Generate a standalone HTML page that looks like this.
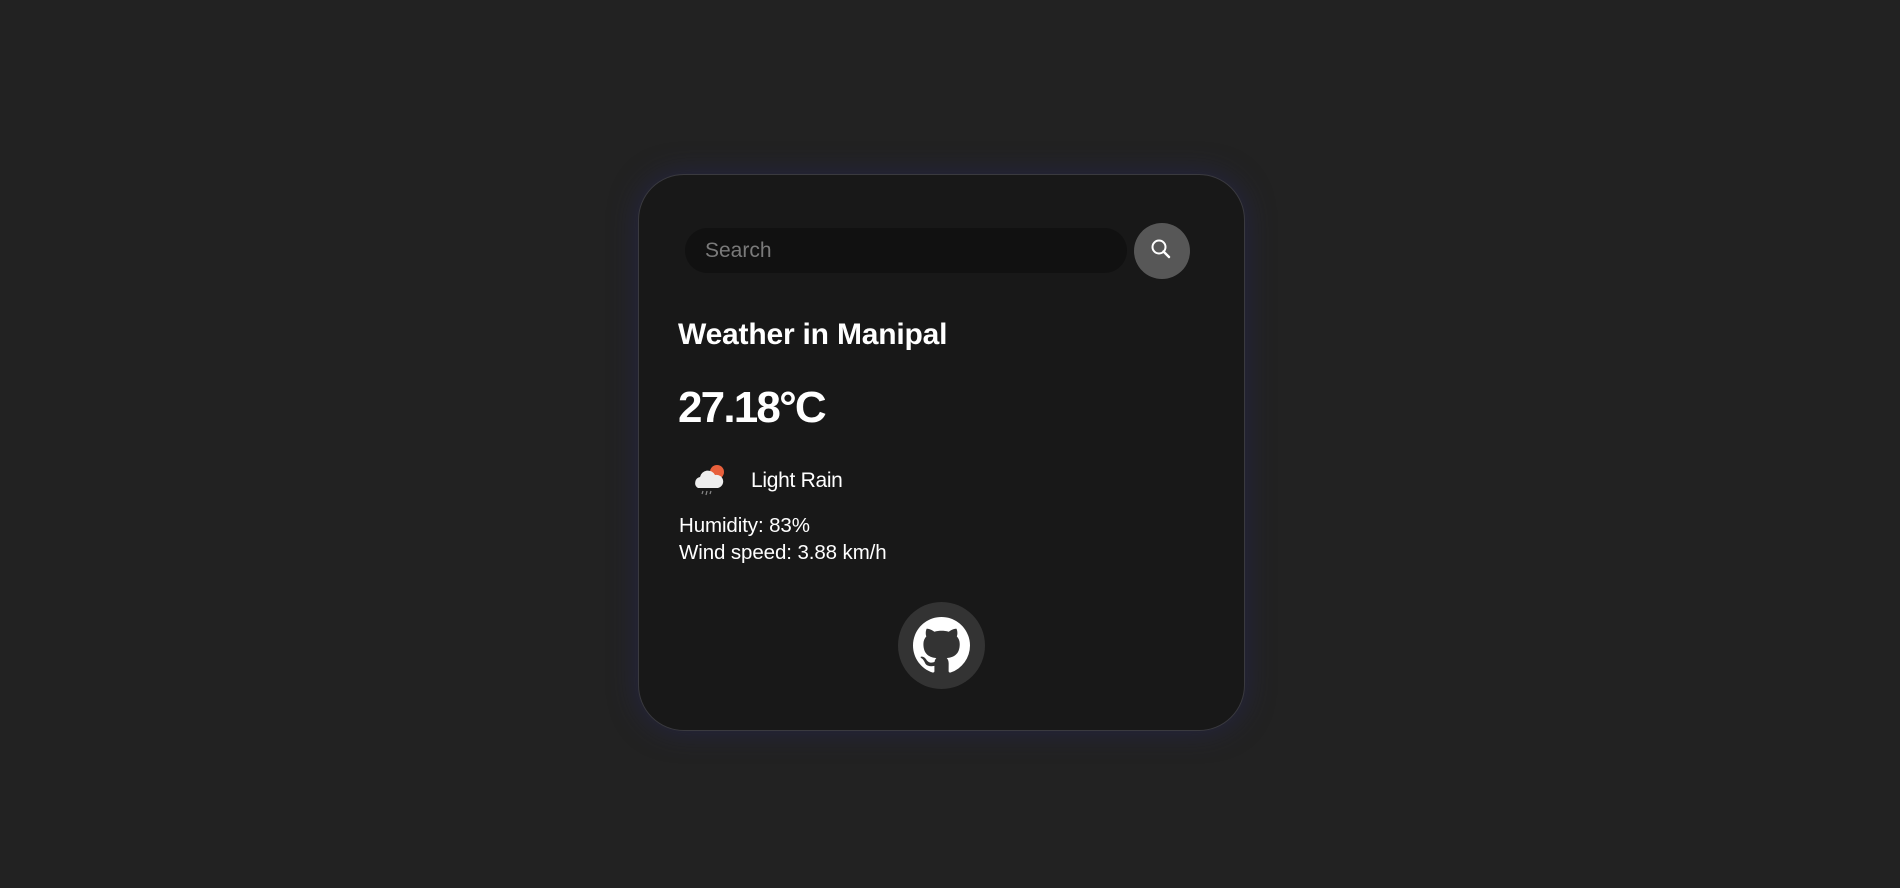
<!DOCTYPE html>
<html><head><style>
html,body{margin:0;width:1900px;height:888px;background:#222;overflow:hidden;font-family:"Liberation Sans",sans-serif;color:#fff}
.card{position:absolute;left:638px;top:174px;width:607px;height:557px;background:#181818;border:1px solid #3a3a3f;border-radius:46px;box-sizing:border-box;box-shadow:0 0 28px rgba(40,40,90,0.6)}
.search{position:absolute;left:685px;top:228px;width:442px;height:45px;border-radius:23px;background:#111;}
.search span{position:absolute;left:20px;top:11px;font-size:21px;color:#7a7a7a}
.btn{position:absolute;left:1134px;top:223px;width:56px;height:56px;border-radius:50%;background:#575757}
.t{position:absolute;white-space:nowrap}
</style></head><body>
<div class="card"></div>
<div class="search"><span>Search</span></div>
<div class="btn"><svg width="56" height="56" viewBox="0 0 56 56"><circle cx="25" cy="24" r="6.5" fill="none" stroke="#fff" stroke-width="2"/><line x1="29.5" y1="28.5" x2="35" y2="34" stroke="#fff" stroke-width="2.4" stroke-linecap="round"/></svg></div>
<div class="t" style="left:678px;top:318px;font-size:30px;font-weight:bold;letter-spacing:-0.2px">Weather in Manipal</div>
<div class="t" style="left:678px;top:383px;font-size:44px;font-weight:bold;letter-spacing:-1.8px">27.18°C</div>
<svg class="t" style="left:692px;top:462px" width="36" height="36" viewBox="0 0 34 36"><circle cx="24" cy="10" r="7" fill="#e8603c"/><path d="M5 26a6 6 0 0 1 2-11 8 8 0 0 1 15-2 6 6 0 0 1 3 13z" fill="#eee"/><g stroke="#888" stroke-width="1.2"><line x1="10" y1="29" x2="9" y2="32"/><line x1="14" y1="29" x2="13" y2="33"/><line x1="18" y1="29" x2="17" y2="32"/></g></svg>
<div class="t" style="left:751px;top:469px;font-size:21px;letter-spacing:-0.3px">Light Rain</div>
<div class="t" style="left:679px;top:512px;font-size:20.5px;line-height:27px;letter-spacing:-0.1px">Humidity: 83%<br>Wind speed: 3.88 km/h</div>
<div class="t" style="left:898px;top:602px;width:87px;height:87px;border-radius:50%;background:#333"><svg style="position:absolute;left:15px;top:15px" width="57" height="57" viewBox="0 0 16 16"><path fill="#fff" d="M8 0C3.58 0 0 3.58 0 8c0 3.540 2.29 6.53 5.47 7.59.4.07.55-.17.55-.38 0-.19-.01-.82-.01-1.49-2.01.37-2.530-.49-2.69-.94-.09-.23-.48-.94-.82-1.13-.28-.15-.68-.52-.01-.53.63-.01 1.08.58 1.23.82.72 1.21 1.87.87 2.33.66.07-.52.28-.87.51-1.07-1.78-.2-3.64-.89-3.64-3.95 0-.87.31-1.59.82-2.15-.08-.2-.36-1.02.08-2.12 0 0 .67-.21 2.2.82.64-.18 1.32-.27 2-.27.68 0 1.36.09 2 .27 1.53-1.04 2.2-.82 2.2-.82.44 1.1.16 1.92.08 2.12.51.56.82 1.27.82 2.15 0 3.07-1.87 3.75-3.65 3.95.29.25.54.73.54 1.48 0 1.07-.01 1.93-.01 2.2 0 .21.15.46.55.38A8.013 8.013 0 0016 8c0-4.420-3.58-8-8-8z"/></svg></div>
</body></html>
